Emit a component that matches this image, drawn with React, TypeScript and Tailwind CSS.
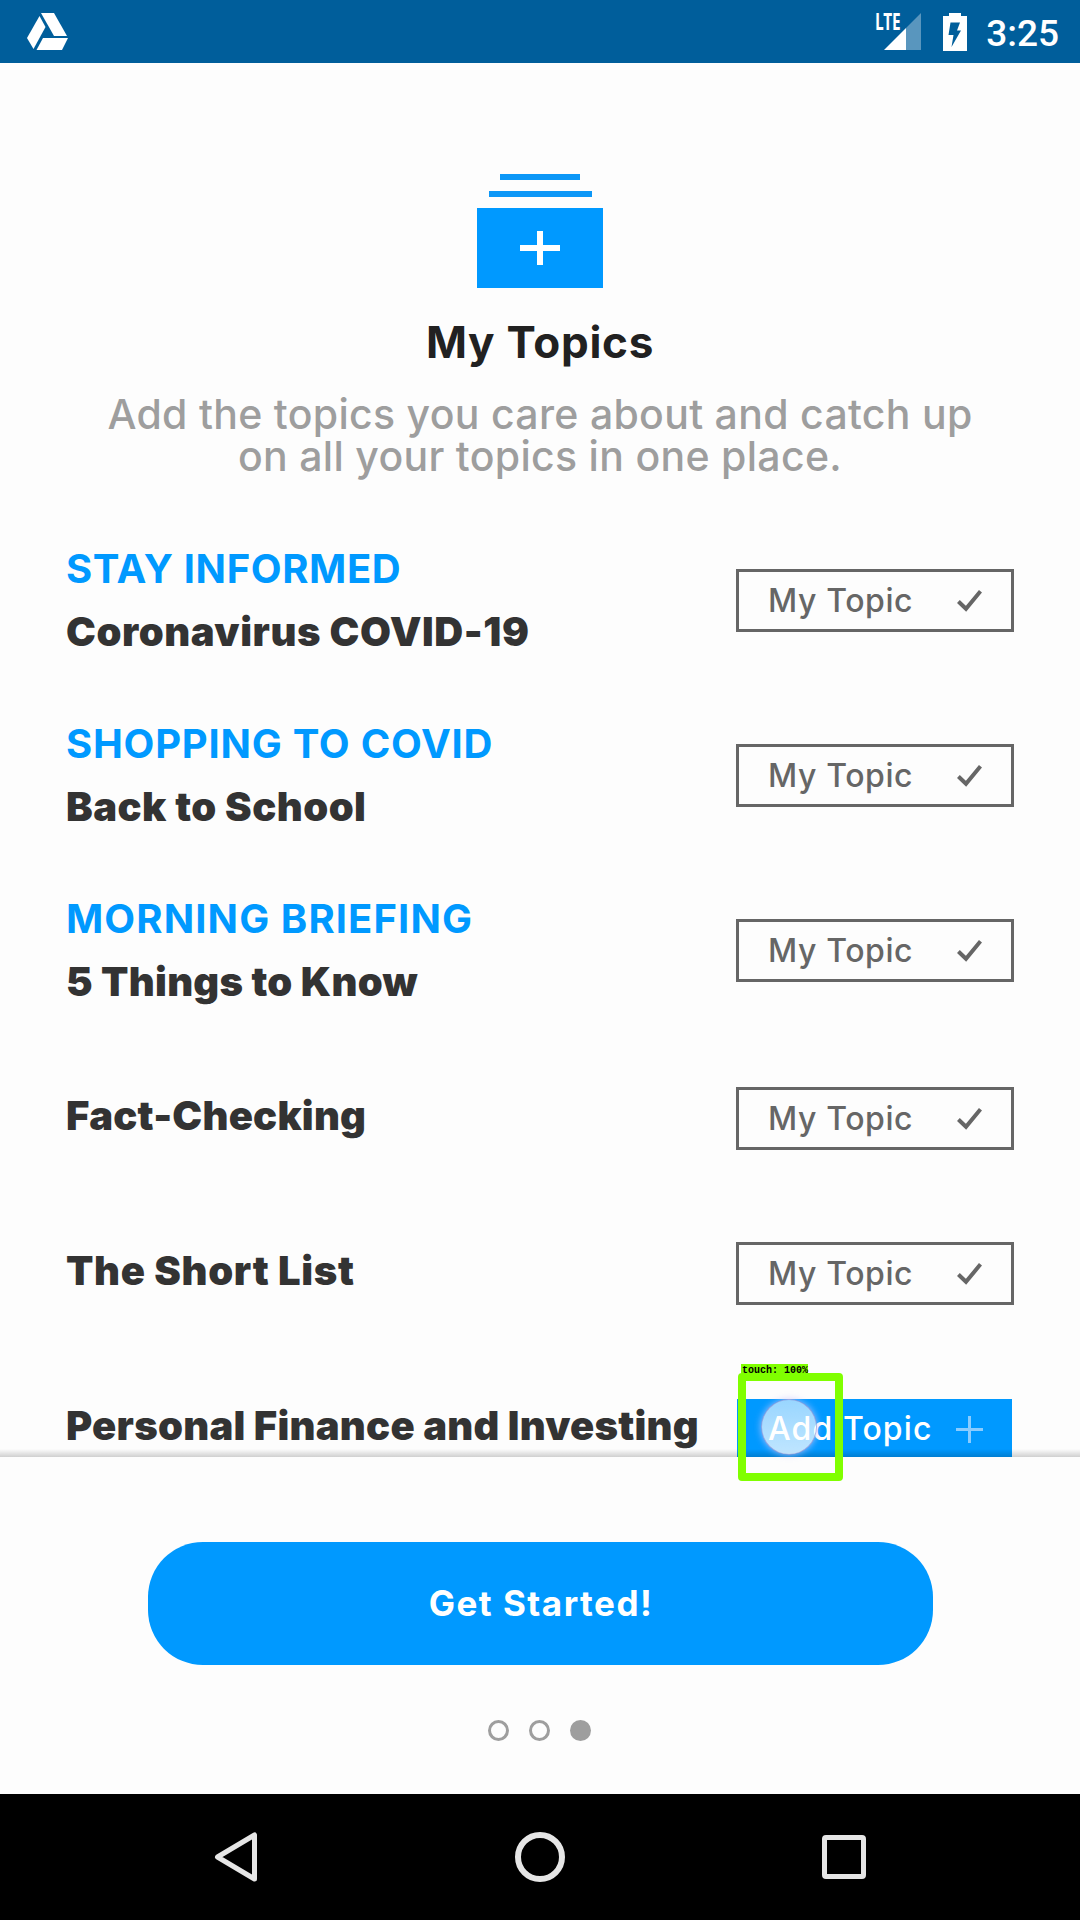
type Topic = { kicker?: string; kickerClass?: string; title: string; titleClass: string };

const featured: Topic[] = [
  { kicker: "STAY INFORMED", kickerClass: "tracking-[0.6px]", title: "Coronavirus COVID-19", titleClass: "tracking-[0.55px]" },
  { kicker: "SHOPPING TO COVID", kickerClass: "tracking-[0.75px]", title: "Back to School", titleClass: "tracking-[0.45px]" },
  { kicker: "MORNING BRIEFING", kickerClass: "tracking-[1.1px]", title: "5 Things to Know", titleClass: "tracking-[0.25px]" },
];

const regular: Topic[] = [
  { title: "Fact-Checking", titleClass: "tracking-[0.2px]" },
  { title: "The Short List", titleClass: "tracking-[0.65px]" },
];

function StatusBar() {
  return (
    <header className="flex h-[63px] items-center justify-between bg-[#005e9b] pl-[27px] pr-[21px] text-white">
      <svg className="h-[37px] w-[41px]" viewBox="0 0 41 37" fill="currentColor">
        <path d="M14 0H27L40 23H27Z" />
        <path d="M12.5 3L18.5 14L6.5 36L0 25Z" />
        <path d="M16 25H41L35 37H9.5Z" />
      </svg>
      <div className="flex items-center">
        <div className="relative mr-[21px] h-[37px] w-[46px]">
          <span className="absolute -left-px top-0 origin-left scale-x-[0.7] scale-y-[1.05] font-['Open_Sans'] text-[22px] font-bold leading-[17px] tracking-[-0.5px]">LTE</span>
          <svg className="absolute left-[8px] top-0 h-[37px] w-[37px]" viewBox="0 0 37 37" fill="currentColor">
            <path d="M22 15L37 0V37H22Z" opacity="0.35" />
            <path d="M0 37L22 15V37Z" />
          </svg>
        </div>
        <svg className="mr-[19px] h-[38px] w-[24px]" viewBox="0 0 24 38">
          <path d="M6 0H18V3H24V38H0V3H6Z" fill="#fff" />
          <path d="M7.5 9.5H17L14 17.5H18L8.5 34L10.5 22H5.5Z" fill="#005e9b" />
        </svg>
        <span className="pt-[4px] font-[Roboto] text-[37px] font-medium leading-none">3:25</span>
      </div>
    </header>
  );
}

function MyTopicButton() {
  return (
    <button className="flex h-[63px] w-[278px] shrink-0 items-center justify-between border-[3px] border-[#666] pl-[29px] pr-[29px] text-[32px] font-medium leading-[44px] tracking-[0.6px] text-[#666]">
      <span>My Topic</span>
      <svg className="h-[22px] w-[25px]" viewBox="0 0 25 22" fill="none" stroke="currentColor" strokeWidth="4">
        <path d="M1.4 11.5L9 18.8L23.5 1.3" />
      </svg>
    </button>
  );
}

export default function App() {
  return (
    <div className="relative flex h-[1920px] w-[1080px] flex-col overflow-hidden bg-[#fdfdfd] font-[Inter,sans-serif]">
      <StatusBar />

      <main className="relative h-[1394px] shrink-0 overflow-hidden pt-[111px]">
        <div className="flex flex-col items-center">
          <div className="h-[6px] w-[80px] bg-[#0c97f7]" />
          <div className="mt-[11px] h-[6px] w-[103px] bg-[#0c97f7]" />
          <div className="mt-[11px] flex h-[80px] w-[126px] items-center justify-center bg-[#0099ff]">
            <svg className="h-[34px] w-[40px]" viewBox="0 0 40 34" fill="#fff">
              <path d="M17 0H23V14H40V20H23V34H17V20H0V14H17Z" />
            </svg>
          </div>
        </div>
        <h1 className="mt-[24px] text-center text-[44px] font-bold leading-[60px] tracking-[0.75px] text-[#212121]">My Topics</h1>
        <p className="mt-[21px] text-center text-[41px] font-medium leading-[42px] tracking-[0.3px] text-[#9e9e9e]">
          Add the topics you care about and catch up
          <br />
          on all your topics in one place.
        </p>

        <section className="mt-[65px] pl-[66px] pr-[66px] text-[40px] leading-[50px]">
          {featured.map((t) => (
            <div key={t.title} className="flex h-[175px] justify-between">
              <div className="flex flex-col gap-[13px] pt-[2px]">
                <div className={`font-bold text-[#0099ff] ${t.kickerClass}`}>{t.kicker}</div>
                <div className={`font-black text-[#333] ${t.titleClass}`}>{t.title}</div>
              </div>
              <div className="pt-[27px]"><MyTopicButton /></div>
            </div>
          ))}
          {regular.map((t) => (
            <div key={t.title} className="flex h-[155px] justify-between">
              <div className={`pt-[24px] font-black text-[#333] ${t.titleClass}`}>{t.title}</div>
              <div className="pt-[20px]"><MyTopicButton /></div>
            </div>
          ))}
          <div className="flex h-[155px] justify-between whitespace-nowrap">
            <div className="pt-[24px] font-black tracking-[0.25px] text-[#333]">Personal Finance and Investing</div>
            <div className="pr-[2px] pt-[22px]">
              <button className="flex h-[60px] w-[275px] items-center justify-between bg-[#0099ff] pl-[31px] pr-[29px] text-[32px] font-medium leading-[44px] tracking-[1.1px] text-white">
                <span>Add Topic</span>
                <svg className="h-[27px] w-[27px]" viewBox="0 0 27 27" stroke="#8accff" strokeWidth="3">
                  <path d="M13.5 0V27M0 13.5H27" />
                </svg>
              </button>
            </div>
          </div>
        </section>
        <div className="absolute inset-x-0 bottom-0 h-[8px] bg-linear-to-b from-black/0 to-black/18" />
      </main>

      <footer className="flex h-[337px] shrink-0 flex-col items-center pt-[85px]">
        <button className="h-[123px] w-[785px] rounded-[55px] bg-[#0099ff] pl-[2px] text-[35px] font-bold tracking-[1.5px] text-white">Get Started!</button>
        <div className="mr-[2px] mt-[55px] flex gap-[20px]">
          <span className="size-[21px] rounded-full border-[3px] border-[#9e9e9e]" />
          <span className="size-[21px] rounded-full border-[3px] border-[#9e9e9e]" />
          <span className="size-[21px] rounded-full bg-[#9e9e9e]" />
        </div>
      </footer>

      <nav className="flex h-[126px] shrink-0 items-center justify-between bg-black pl-[214px] pr-[214px]">
        <svg className="h-[50px] w-[44px]" viewBox="0 0 44 50" fill="none" stroke="#e6e6e6" strokeWidth="5" strokeLinejoin="round">
          <path d="M40.5 3V47L3.5 25Z" />
        </svg>
        <span className="size-[50px] rounded-full border-[6px] border-[#e6e6e6]" />
        <span className="size-[44px] rounded-[4px] border-[5px] border-[#e6e6e6]" />
      </nav>

      <div className="absolute left-[761px] top-[1399px] size-[56px] rounded-full border border-[#8080d0]/60 bg-linear-to-b from-white/60 to-white/75 shadow-[0_0_7px_rgba(200,200,255,0.8)]" />
      <div className="absolute left-[738px] top-[1373px] h-[108px] w-[105px] rounded-[4px] border-8 border-[#80ff00]" />
      <div className="absolute left-[741px] top-[1364px] h-[13px] w-[67px] whitespace-nowrap bg-[#80ff00] pl-px font-['Liberation_Mono',monospace] text-[10px] font-bold leading-[13px] text-black">touch: 100%</div>
    </div>
  );
}
